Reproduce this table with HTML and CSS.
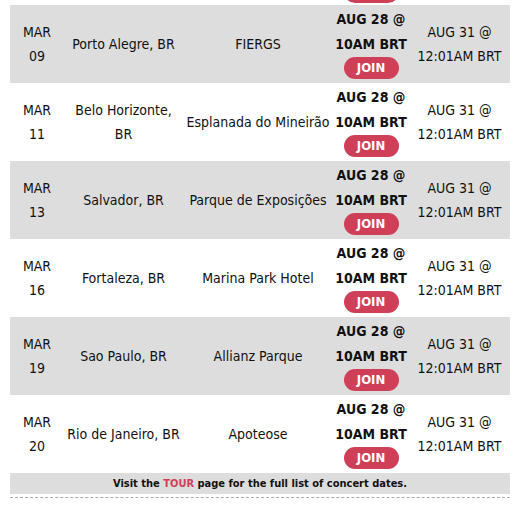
FILE: index.html
```html
<!DOCTYPE html>
<html>
<head>
<meta charset="utf-8">
<link rel="stylesheet" href="styles.css">
</head>
<body>
<div class="page">
  <div class="schedule">
    <div class="row partial">
      <div class="cell"></div>
      <div class="cell"></div>
      <div class="cell"></div>
      <div class="cell presale"><a class="join">JOIN</a></div>
      <div class="cell"></div>
    </div>
    <div class="row shaded">
      <div class="cell date">MAR<br>09</div>
      <div class="cell city">Porto Alegre, BR</div>
      <div class="cell venue">FIERGS</div>
      <div class="cell presale"><span class="when">AUG 28 @<br>10AM BRT</span><a class="join">JOIN</a></div>
      <div class="cell onsale">AUG 31 @<br>12:01AM BRT</div>
    </div>
    <div class="row">
      <div class="cell date">MAR<br>11</div>
      <div class="cell city">Belo Horizonte, BR</div>
      <div class="cell venue">Esplanada do Mineirão</div>
      <div class="cell presale"><span class="when">AUG 28 @<br>10AM BRT</span><a class="join">JOIN</a></div>
      <div class="cell onsale">AUG 31 @<br>12:01AM BRT</div>
    </div>
    <div class="row shaded">
      <div class="cell date">MAR<br>13</div>
      <div class="cell city">Salvador, BR</div>
      <div class="cell venue">Parque de Exposições</div>
      <div class="cell presale"><span class="when">AUG 28 @<br>10AM BRT</span><a class="join">JOIN</a></div>
      <div class="cell onsale">AUG 31 @<br>12:01AM BRT</div>
    </div>
    <div class="row">
      <div class="cell date">MAR<br>16</div>
      <div class="cell city">Fortaleza, BR</div>
      <div class="cell venue">Marina Park Hotel</div>
      <div class="cell presale"><span class="when">AUG 28 @<br>10AM BRT</span><a class="join">JOIN</a></div>
      <div class="cell onsale">AUG 31 @<br>12:01AM BRT</div>
    </div>
    <div class="row shaded">
      <div class="cell date">MAR<br>19</div>
      <div class="cell city">Sao Paulo, BR</div>
      <div class="cell venue">Allianz Parque</div>
      <div class="cell presale"><span class="when">AUG 28 @<br>10AM BRT</span><a class="join">JOIN</a></div>
      <div class="cell onsale">AUG 31 @<br>12:01AM BRT</div>
    </div>
    <div class="row">
      <div class="cell date">MAR<br>20</div>
      <div class="cell city">Rio de Janeiro, BR</div>
      <div class="cell venue">Apoteose</div>
      <div class="cell presale"><span class="when">AUG 28 @<br>10AM BRT</span><a class="join">JOIN</a></div>
      <div class="cell onsale">AUG 31 @<br>12:01AM BRT</div>
    </div>
    <div class="footer">Visit the <a class="tour">TOUR</a> page for the full list of concert dates.</div>
  </div>
</div>
</body>
</html>
```

FILE: styles.css
```css
html, body {
  margin: 0;
  padding: 0;
  background: #ffffff;
}
body {
  font-family: "DejaVu Sans Condensed", "DejaVu Sans", Tahoma, sans-serif;
  font-size: 14px;
  color: #111111;
}
.page {
  padding: 0 8px 0 10px;
}
.schedule {
  width: 500px;
  border-bottom: 1px dashed #aaaaaa;
  padding-bottom: 3px;
}
.row {
  display: grid;
  grid-template-columns: 54px 119px 150px 76px 101px;
  height: 78px;
  align-items: center;
  background: #ffffff;
}
.row.shaded {
  background: #dddddd;
}
.row.partial {
  height: 5px;
  overflow: hidden;
  align-items: end;
}
.row.partial .presale {
  height: 5px;
  justify-content: flex-end;
  padding-bottom: 2px;
  box-sizing: border-box;
}
.row.partial .join {
  flex: none;
}
.cell {
  text-align: center;
  line-height: 24px;
  padding: 0 3px;
}
.presale {
  display: flex;
  flex-direction: column;
  align-items: center;
  font-weight: bold;
  padding: 0;
  white-space: nowrap;
}
.when {
  display: block;
  line-height: 25px;
  margin-top: -2px;
}
.join {
  display: block;
  width: 55px;
  height: 22px;
  line-height: 22px;
  border-radius: 11px;
  background: #cf3f57;
  color: #ffffff;
  font-size: 13px;
  font-weight: bold;
}
.footer {
  background: #dddddd;
  height: 21px;
  line-height: 21px;
  text-align: center;
  font-size: 11px;
  font-weight: bold;
}
.tour {
  color: #cf3f57;
}
```
